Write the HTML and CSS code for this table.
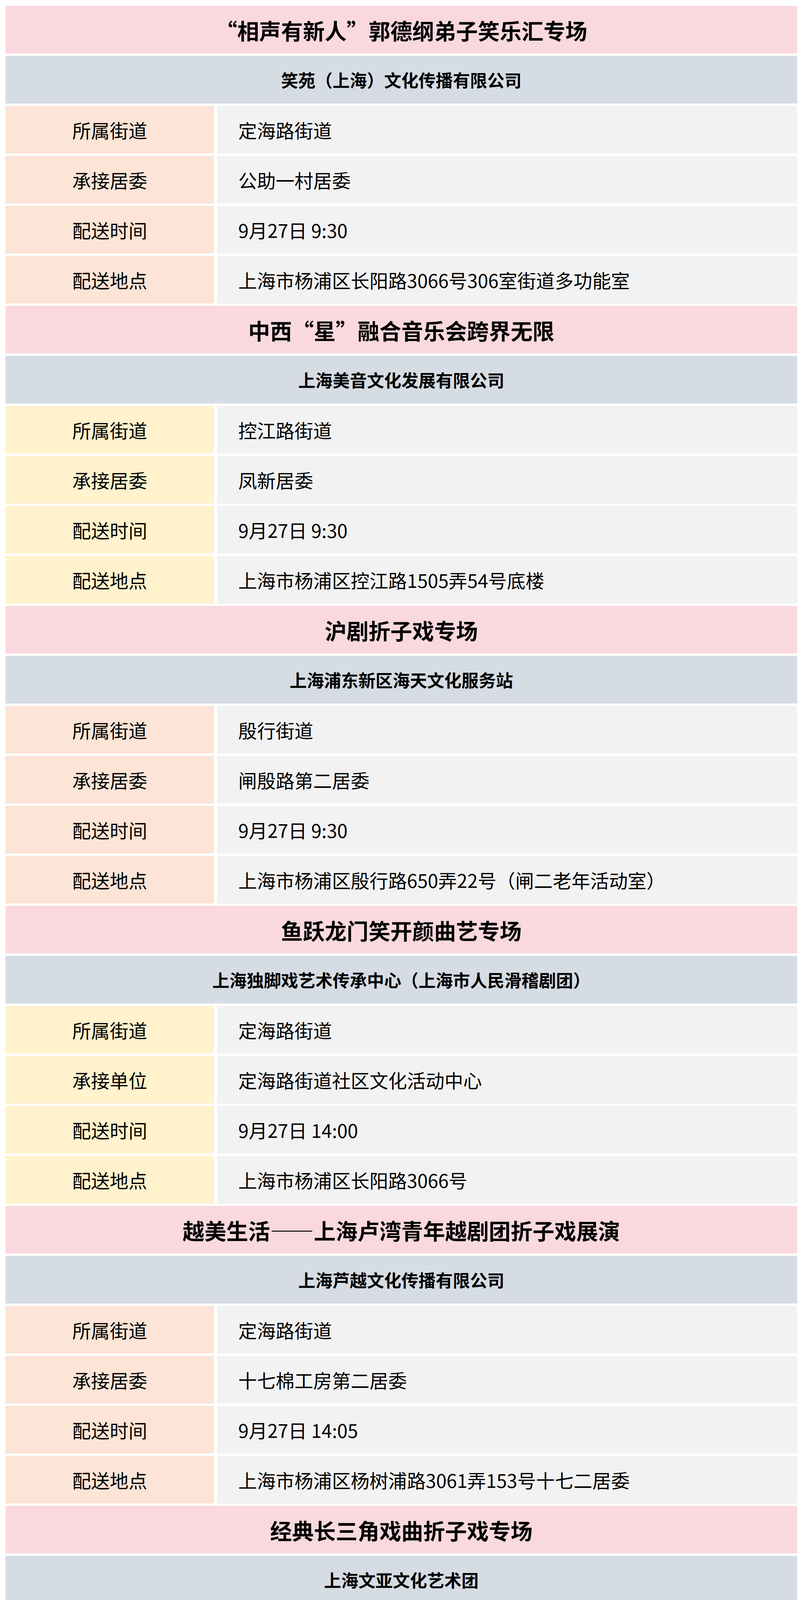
FILE: index.html
```html
<!DOCTYPE html>
<html lang="zh-CN">
<head>
<meta charset="utf-8">
<title>配送安排</title>
<link rel="stylesheet" href="styles.css">
</head>
<body>
<div class="sheet">
  <div class="title">“相声有新人”郭德纲弟子笑乐汇专场</div>
  <div class="company">笑苑（上海）文化传播有限公司</div>
  <div class="label peach">所属街道</div><div class="value">定海路街道</div>
  <div class="label peach">承接居委</div><div class="value">公助一村居委</div>
  <div class="label peach">配送时间</div><div class="value">9月27日 9:30</div>
  <div class="label peach">配送地点</div><div class="value">上海市杨浦区长阳路3066号306室街道多功能室</div>

  <div class="title">中西“星”融合音乐会跨界无限</div>
  <div class="company">上海美音文化发展有限公司</div>
  <div class="label yellow">所属街道</div><div class="value">控江路街道</div>
  <div class="label yellow">承接居委</div><div class="value">凤新居委</div>
  <div class="label yellow">配送时间</div><div class="value">9月27日 9:30</div>
  <div class="label yellow">配送地点</div><div class="value">上海市杨浦区控江路1505弄54号底楼</div>

  <div class="title">沪剧折子戏专场</div>
  <div class="company">上海浦东新区海天文化服务站</div>
  <div class="label peach">所属街道</div><div class="value">殷行街道</div>
  <div class="label peach">承接居委</div><div class="value">闸殷路第二居委</div>
  <div class="label peach">配送时间</div><div class="value">9月27日 9:30</div>
  <div class="label peach">配送地点</div><div class="value">上海市杨浦区殷行路650弄22号（闸二老年活动室）</div>

  <div class="title">鱼跃龙门笑开颜曲艺专场</div>
  <div class="company">上海独脚戏艺术传承中心（上海市人民滑稽剧团）</div>
  <div class="label yellow">所属街道</div><div class="value">定海路街道</div>
  <div class="label yellow">承接单位</div><div class="value">定海路街道社区文化活动中心</div>
  <div class="label yellow">配送时间</div><div class="value">9月27日 14:00</div>
  <div class="label yellow">配送地点</div><div class="value">上海市杨浦区长阳路3066号</div>

  <div class="title">越美生活——上海卢湾青年越剧团折子戏展演</div>
  <div class="company">上海芦越文化传播有限公司</div>
  <div class="label peach">所属街道</div><div class="value">定海路街道</div>
  <div class="label peach">承接居委</div><div class="value">十七棉工房第二居委</div>
  <div class="label peach">配送时间</div><div class="value">9月27日 14:05</div>
  <div class="label peach">配送地点</div><div class="value">上海市杨浦区杨树浦路3061弄153号十七二居委</div>

  <div class="title">经典长三角戏曲折子戏专场</div>
  <div class="company">上海文亚文化艺术团</div>
  <div class="label yellow">所属街道</div><div class="value">长海路街道</div>
  <div class="label yellow">承接居委</div><div class="value">佳龙居委</div>
  <div class="label yellow">配送时间</div><div class="value">9月29日 9:30</div>
  <div class="label yellow">配送地点</div><div class="value">上海市杨浦区营口路600弄43号二楼</div>

  <div class="title">艾佳戏曲综合专场</div>
  <div class="company">上海俊欣文化传媒有限公司</div>
  <div class="label peach">所属街道</div><div class="value">控江路街道</div>
  <div class="label peach">承接居委</div><div class="value">凤联居委</div>
  <div class="label peach">配送时间</div><div class="value">9月29日 14:30</div>
  <div class="label peach">配送地点</div><div class="value">上海市杨浦区凤城六村6-1临</div>
</div>
</body>
</html>
```

FILE: styles.css
```css
html, body {
  margin: 0;
  padding: 0;
  background: #ffffff;
}

body {
  padding: 15px 15px 0 14px;
  font-family: "Noto Sans CJK SC", "Noto Sans", sans-serif;
  color: #000000;
}

.sheet {
  display: grid;
  grid-template-columns: 534px 1fr;
  grid-auto-rows: 122px;
  column-gap: 8px;
  row-gap: 6px;
}

.title,
.company {
  grid-column: 1 / -1;
  display: flex;
  align-items: center;
  justify-content: center;
  font-weight: 700;
}

.title {
  background: #f9d9de;
  font-size: 56px;
}

.company {
  background: #d6dce4;
  font-size: 44px;
}

.label {
  display: flex;
  align-items: center;
  justify-content: center;
  font-size: 48px;
}

.peach {
  background: #fce4d6;
}

.yellow {
  background: #fff2cc;
}

.value {
  display: flex;
  align-items: center;
  padding-left: 54px;
  background: #f2f2f2;
  font-size: 48px;
}
```
